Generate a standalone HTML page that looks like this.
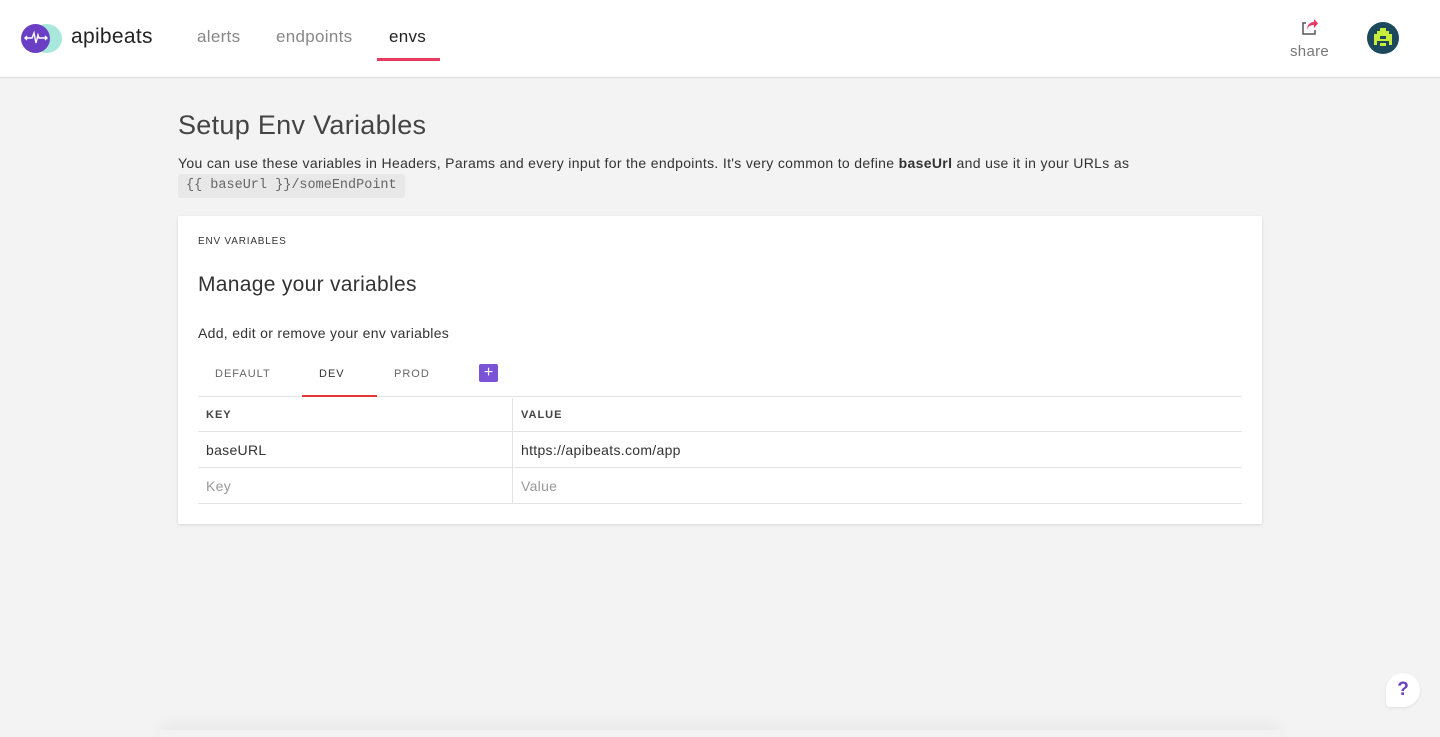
<!DOCTYPE html>
<html style="overflow:hidden;width:1440px;height:737px"><head><meta charset="utf-8"><style>
*{box-sizing:border-box;margin:0;padding:0}
body{width:1440px;height:737px;overflow:hidden;background:#f3f3f3;font-family:"Liberation Sans",sans-serif;color:#333;position:relative}
.hdr{position:absolute;left:0;top:0;width:1440px;height:78px;background:#fff;border-bottom:1px solid #ddd}
.nav{position:absolute;top:27px;font-size:17px;color:#888;letter-spacing:.3px}
.abs{position:absolute}
h1{position:absolute;left:178px;top:110px;font-size:27px;font-weight:400;color:#444;letter-spacing:.3px}
.desc{position:absolute;left:178px;top:155px;font-size:14px;color:#333;letter-spacing:.33px;white-space:nowrap}
.code{position:absolute;left:178px;top:174px;width:227px;height:24px;background:#e8e8e8;border-radius:3px;font-family:"Liberation Mono",monospace;font-size:13.5px;color:#666;padding:4px 8px;white-space:nowrap;overflow:hidden}
.card{position:absolute;left:178px;top:216px;width:1084px;height:308px;background:#fff;box-shadow:0 1px 3px rgba(0,0,0,.12);border-radius:2px}
.tab{position:absolute;top:152px;font-size:11px;letter-spacing:1px;color:#666}
.th{font-size:11px;letter-spacing:1px;font-weight:bold;color:#444}
.line{position:absolute;left:20px;width:1044px;height:1px;background:#e3e3e3}
.t14{font-size:14px;letter-spacing:.3px}
</style></head><body>
<div class="hdr">
 <div class="abs" style="left:31px;top:24px;width:31px;height:29px;border-radius:50%;background:#a8e8dc"></div>
 <div class="abs" style="left:21px;top:24px;width:29px;height:29px;border-radius:50%;background:#6a3fc4"></div>
 <svg class="abs" style="left:23px;top:30px" width="26" height="16" viewBox="0 0 26 16"><path d="M2 8H9L11 3L13 13L15 5L16 8H24M4 6L2 8L4 10M22 6L24 8L22 10" stroke="#fff" stroke-width="1.4" fill="none"/></svg>
 <div class="abs" style="left:71px;top:25px;font-size:21px;color:#222;letter-spacing:.3px">apibeats</div>
 <div class="nav" style="left:197px">alerts</div>
 <div class="nav" style="left:276px">endpoints</div>
 <div class="nav" style="left:389px;color:#222">envs</div>
 <div class="abs" style="left:377px;top:58px;width:63px;height:3px;background:#e8395f"></div>
 <svg class="abs" style="left:1301px;top:19px" width="18" height="16" viewBox="0 0 18 16"><path d="M5 4H2V15H14V11" stroke="#555" stroke-width="1.5" fill="none"/><path d="M6 11C7 7 10 6 13 6V9L17 4.5L13 0V3C9 3 6 6 6 11Z" fill="#e8395f"/></svg>
 <div class="abs" style="left:1290px;top:43px;font-size:15px;color:#777;letter-spacing:.3px">share</div>
 <svg class="abs" style="left:1367px;top:22px" width="32" height="32" viewBox="0 0 32 32"><circle cx="16" cy="16" r="16" fill="#1c4a5c"/><g fill="#c8ec3c"><rect x="13" y="6" width="6" height="3"/><rect x="10" y="9" width="12" height="3"/><rect x="7" y="12" width="6" height="7"/><rect x="19" y="12" width="6" height="7"/><rect x="13" y="12" width="6" height="2"/><rect x="13" y="17" width="6" height="2"/><rect x="7" y="19" width="3" height="4"/><rect x="22" y="19" width="3" height="4"/><rect x="13" y="21" width="6" height="3"/></g></svg>
</div>
<h1>Setup Env Variables</h1>
<div class="desc">You can use these variables in Headers, Params and every input for the endpoints. It's very common to define <b>baseUrl</b> and use it in your URLs as</div>
<div class="code">{{ baseUrl }}/someEndPoint</div>
<div class="card">
 <div class="abs" style="left:20px;top:20px;font-size:10px;letter-spacing:.8px;color:#333">ENV VARIABLES</div>
 <div class="abs" style="left:20px;top:57px;font-size:21px;color:#333;letter-spacing:.3px">Manage your variables</div>
 <div class="abs t14" style="left:20px;top:109px;color:#333">Add, edit or remove your env variables</div>
 <div class="tab" style="left:37px">DEFAULT</div>
 <div class="tab" style="left:141px;color:#333">DEV</div>
 <div class="tab" style="left:216px">PROD</div>
 <div class="abs" style="left:301px;top:148px;width:19px;height:18px;background:#7a52d6;border-radius:2px;color:#fff;font-size:16px;line-height:17px;text-align:center">+</div>
 <div class="line" style="top:180px"></div>
 <div class="abs" style="left:124px;top:179px;width:75px;height:2px;background:#e53935"></div>
 <div class="abs" style="left:334px;top:182px;width:1px;height:105px;background:#e3e3e3"></div>
 <div class="abs th" style="left:28px;top:193px">KEY</div>
 <div class="abs th" style="left:343px;top:193px">VALUE</div>
 <div class="line" style="top:215px"></div>
 <div class="abs t14" style="left:28px;top:226px">baseURL</div>
 <div class="abs t14" style="left:343px;top:226px">https://apibeats.com/app</div>
 <div class="line" style="top:251px"></div>
 <div class="abs t14" style="left:28px;top:262px;color:#999">Key</div>
 <div class="abs t14" style="left:343px;top:262px;color:#999">Value</div>
 <div class="line" style="top:287px"></div>
</div>
<div class="abs" style="left:160px;top:730px;width:1120px;height:7px;background:#f3f3f3;box-shadow:0 -4px 14px rgba(0,0,0,.08)"></div>
<div class="abs" style="left:1386px;top:673px;width:34px;height:34px;border-radius:50% 50% 50% 4px;background:#fff;box-shadow:0 1px 3px rgba(0,0,0,.08);color:#6a3fc4;font-size:19px;font-weight:bold;text-align:center;line-height:34px">?</div>
</body></html>
